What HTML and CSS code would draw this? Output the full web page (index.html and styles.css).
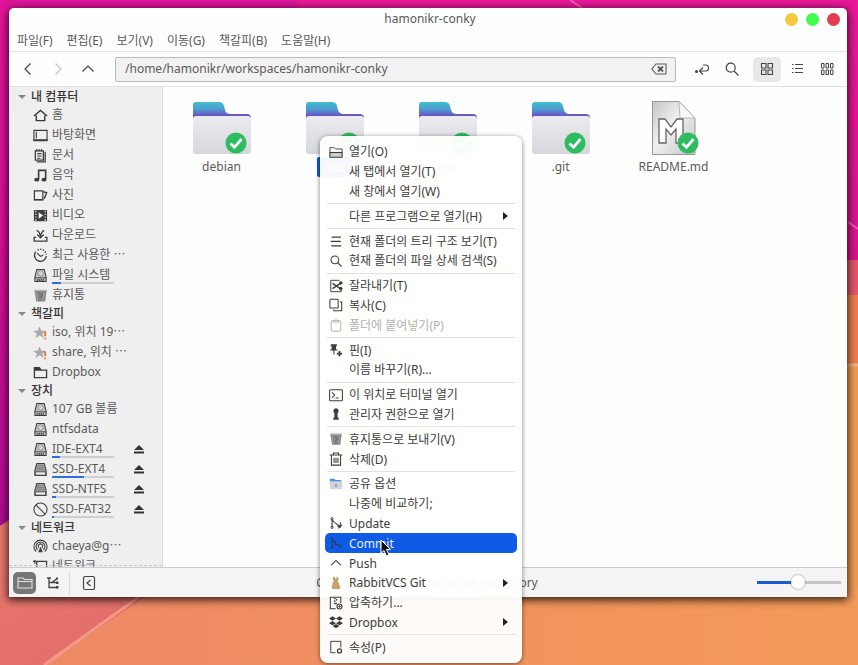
FILE: index.html
```html
<!DOCTYPE html>
<html lang="ko">
<head>
<meta charset="utf-8">
<title>hamonikr-conky</title>
<link rel="stylesheet" href="styles.css">
</head>
<body>
<svg class="wallpaper" viewBox="0 0 858 665" preserveAspectRatio="none" aria-hidden="true">
  <defs>
    <linearGradient id="wpPink" x1="0" y1="0" x2="0" y2="1"><stop offset="0" stop-color="#e2149a"/><stop offset=".4" stop-color="#d01094"/><stop offset="1" stop-color="#9a0a90"/></linearGradient>
    <linearGradient id="wpRight" x1="0" y1="0" x2="0" y2="1"><stop offset="0" stop-color="#ea189a"/><stop offset="1" stop-color="#d9118c"/></linearGradient>
    <linearGradient id="wpOrange" x1="0" y1="0" x2="1" y2="0"><stop offset="0" stop-color="#ee8868"/><stop offset=".5" stop-color="#f1915f"/><stop offset="1" stop-color="#f39a58"/></linearGradient>
    <linearGradient id="wpCoral" x1="0" y1="0" x2="1" y2="1"><stop offset="0" stop-color="#e87a6c"/><stop offset=".6" stop-color="#e4706c"/><stop offset="1" stop-color="#cf4c60"/></linearGradient>
  </defs>
  <rect width="858" height="665" fill="url(#wpPink)"/>
  <rect x="300" width="558" height="262" fill="url(#wpRight)"/>
  <rect x="430" y="260" width="428" height="35" fill="#e4566a"/>
  <rect x="430" y="295" width="428" height="70" fill="#ec7d4e"/>
  <rect x="430" y="365" width="428" height="300" fill="#f09a50"/>
  <path d="M430 365H858" stroke="#f5b088" stroke-width="3"/>
  <path d="M848 222L858 229" stroke="#f45cb8" stroke-width="2"/>
  <path d="M0 665V590L200 480H820V590H858V665Z" fill="url(#wpOrange)"/>
  <path d="M0 526L40 500L200 560L44 665H0Z" fill="url(#wpCoral)"/>
  <path d="M44 665L146 592" stroke="#f39a84" stroke-width="3"/>
  <path d="M570 0L582 8" stroke="#f45cb8" stroke-width="2"/>
</svg>

<svg class="sprite" aria-hidden="true">
  <defs>
    <linearGradient id="gTab" x1="0" y1="0" x2="0" y2="1"><stop offset="0" stop-color="#3fc0cc"/><stop offset=".4" stop-color="#5098d0"/><stop offset=".72" stop-color="#6b52c4"/></linearGradient>
    <linearGradient id="gFront" x1="0" y1="0" x2="0" y2="1"><stop offset="0" stop-color="#ececf0"/><stop offset="1" stop-color="#d6d7da"/></linearGradient>
    <linearGradient id="gDoc" x1="0" y1="0" x2="1" y2="1"><stop offset="0" stop-color="#c6c6c6"/><stop offset=".45" stop-color="#f0f0f0"/><stop offset="1" stop-color="#c4c4c4"/></linearGradient>
  </defs>
  <symbol id="check" viewBox="0 0 22 22"><circle cx="11" cy="11" r="10.5" fill="#2dbd60" stroke="none"/><path d="M5.500 11.500L9.500 15.300L16.500 7" fill="none" stroke="#fff" stroke-width="2.800"/></symbol>
  <symbol id="folder" viewBox="0 0 58 54">
    <path d="M0 20V4Q0 1 3 1H26Q30 1 31 5L32 9Q33 13 38 13H54Q58 13 58 17V20Z" fill="url(#gTab)" stroke="none"/>
    <path d="M3 15H55Q58 15 58 18V50Q58 53 55 53H3Q0 53 0 50V18Q0 15 3 15Z" fill="url(#gFront)" stroke="none"/>
    <use href="#check" x="32" y="31" width="22" height="22"/>
  </symbol>
  <symbol id="readme" viewBox="0 0 58 54">
    <path d="M7.500 .5H34L50 17V53.500H7.500Z" fill="url(#gDoc)" stroke="#999"/>
    <path d="M34 .5L50 17H35Z" fill="#f8f8f8" stroke="#aaa" stroke-width=".8"/>
    <path d="M14 42V18H20L26 26L32 18H38V42H31V28L26 34L21 28V42Z" fill="#fff" stroke="#666" stroke-width="1.300"/>
    <use href="#check" x="32" y="31" width="22" height="22"/>
  </symbol>
  <symbol id="back" viewBox="0 0 16 16"><path d="M10.500 2.500L5 8L10.500 13.500" stroke-width="1.200"/></symbol>
  <symbol id="next" viewBox="0 0 16 16"><path d="M5.500 2.500L11 8L5.500 13.500" stroke-width="1.200"/></symbol>
  <symbol id="up" viewBox="0 0 16 16"><path d="M2.500 10.500L8 5L13.500 10.500" stroke-width="1.200"/></symbol>
  <symbol id="clear" viewBox="0 0 16 16"><path d="M5 3H15V13H5L.8 8Z" stroke-width="1.100"/><path d="M7 5.500L12 10.500M12 5.500L7 10.500" stroke-width="1.900"/></symbol>
  <symbol id="path" viewBox="0 0 16 16"><path d="M9 4H12Q14.500 4 14.500 7Q14.500 10 12 10H5.500M9 6.500L5.500 10L9 13.500" stroke-width="1.100"/><circle cx="2.500" cy="10.500" r="1.500" fill="currentColor" stroke="none"/></symbol>
  <symbol id="search" viewBox="0 0 16 16"><circle cx="6.700" cy="6.700" r="4.500" stroke-width="1.200"/><path d="M10 10L14.500 14.500" stroke-width="1.300"/></symbol>
  <symbol id="grid" viewBox="0 0 16 16"><path d="M2.500 2.500H7V7H2.500ZM9 2.500H13.500V7H9ZM2.500 9H7V13.500H2.500ZM9 9H13.500V13.500H9Z" stroke-width="1.100"/></symbol>
  <symbol id="list" viewBox="0 0 16 16"><path d="M6 3.500H14M6 7.500H14M6 11.500H14M3 3.500H4.500M3 7.500H4.500M3 11.500H4.500" stroke-width="1.100"/></symbol>
  <symbol id="compact" viewBox="0 0 16 16"><path d="M2.500 2.500H5V7H2.500ZM7 2.500H9.500V7H7ZM11.500 2.500H14V7H11.500ZM2.500 9H5V13.500H2.500ZM7 9H9.500V13.500H7ZM11.500 9H14V13.500H11.500Z" stroke-width="1"/></symbol>
  <symbol id="home" viewBox="0 0 16 16"><path d="M1 8.500L8 2.500L15 8.500M3.500 8V13.500H12.500V8" stroke-width="1.500"/></symbol>
  <symbol id="desktop" viewBox="0 0 16 16"><path d="M1 2.500H15V13H1ZM3.500 4V11" stroke-width="1.200"/><path d="M.5 13H15.500" stroke-width="2"/></symbol>
  <symbol id="docs" viewBox="0 0 16 16"><path d="M2.500 3H11V13H2.500ZM4 14.700H13V4" stroke-width="1.400"/><path d="M4.500 6H9M4.500 8.500H9M4.500 11H8M4 1V3.500M6.500 1V3.500M9 1V3.500" stroke-width="1.100"/></symbol>
  <symbol id="music" viewBox="0 0 16 16"><path d="M6 12V2.500H13.500V12" stroke-width="1.700"/><ellipse cx="4" cy="12.500" rx="2.700" ry="2" fill="currentColor" stroke="none"/><ellipse cx="11.700" cy="12.500" rx="2.700" ry="2" fill="currentColor" stroke="none"/></symbol>
  <symbol id="photos" viewBox="0 0 16 16"><path d="M1.500 3H10.500V12.500H1.500Z" stroke-width="1.300"/><path d="M1 12.500H11M11 4L14.500 5L12 11.500" stroke-width="1.500"/></symbol>
  <symbol id="video" viewBox="0 0 16 16"><path d="M1 2H15V14H1Z" fill="currentColor" stroke="none"/><path d="M6 4.500L11 8L6 11.500Z" fill="#eee" stroke="none"/><path d="M3 3V14M13 3V14" stroke="#eee" stroke-width="1.300" stroke-dasharray="1.500 1.500"/></symbol>
  <symbol id="download" viewBox="0 0 16 16"><path d="M4 2.500Q7.500 4 8 10Q8.500 4 12 2.500M4.500 7L8 10.500L11.500 7M3.500 10H1.200V14H14.800V10H12.500" stroke-width="1.400"/></symbol>
  <symbol id="recent" viewBox="0 0 16 16"><path d="M3 4A6.300 6.300 0 1 0 14.200 8.500" stroke-width="1.400"/><path d="M5 2A6.300 6.300 0 0 1 14 7" stroke-width="1.500" stroke-dasharray="1.300 1.500"/><path d="M4.500 5.500L8 9L11 7.500" stroke-width="1.200"/></symbol>
  <symbol id="disk" viewBox="0 0 16 16"><path d="M4 1.500H12L14 10V14.500H2V10Z" fill="#c4c4c4" stroke-width="1.100"/><path d="M2 10.500H14" stroke-width="1"/><path d="M4 12.700H12" stroke-width="1.600" stroke-dasharray="1.500 .6"/><circle cx="8" cy="5.800" r="2.800" fill="#eee" stroke="#777" stroke-width=".9"/><path d="M6.500 6.500L9 5" stroke="#777" stroke-width=".8"/></symbol>
  <symbol id="usb" viewBox="0 0 16 16"><path d="M4 1.500H12L14 9V14.500H2V9Z" fill="#a4a4a4" stroke-width="1.100"/><path d="M2.500 10.500H13.500V14H2.500Z" fill="#eee" stroke-width=".9"/><path d="M4.500 4H11.500M4 6.200H12M4 8.200H12" stroke="#777" stroke-width="1"/></symbol>
  <symbol id="trash" viewBox="0 0 16 16"><path d="M1.500 2H14.500L13 14.500H3.500Z" fill="#858585" stroke="none"/><path d="M1.500 2.500H14.500" stroke="#bbb" stroke-width="1.500"/><path d="M4 5L5 13.500M12 5L11 13.500" stroke="#aaa" stroke-width="1"/><path d="M7 6L10 8L6.500 11" stroke="#666" stroke-width="1"/></symbol>
  <symbol id="star" viewBox="0 0 16 16"><path d="M7 1.500L9 6H14L10 9.200L11.500 14L7 11L2.500 14L4 9.200L0 6H5Z" fill="#aaa" stroke="none"/><path d="M13 7V12M13 13.500V15.200" stroke="#e2703a" stroke-width="2"/></symbol>
  <symbol id="dir" viewBox="0 0 16 16"><path d="M1.500 3H7L8.500 5.500H14.500V13.500H1.500Z" stroke-width="1.400"/><path d="M1 2H7L8.500 6H1Z" fill="currentColor" stroke="none"/></symbol>
  <symbol id="none" viewBox="0 0 16 16"><circle cx="8" cy="8" r="7" stroke-width="1.100"/><path d="M3 3L13 13" stroke-width="1.100"/></symbol>
  <symbol id="wave" viewBox="0 0 16 16"><path d="M3.500 13.500A7 7 0 1 1 12.500 13.500M5 11.500A4.700 4.700 0 1 1 11 11.500M6.500 9.500A2.400 2.400 0 1 1 9.500 9.500" stroke-width="1.200"/><path d="M8 8L5.500 14H10.500Z" fill="currentColor" stroke="none"/></symbol>
  <symbol id="net" viewBox="0 0 16 16"><path d="M4 2.500H14.500V10H4ZM2 1V5M0 2.500H3M9 10V14M4 14H14" stroke-width="1.300"/></symbol>
  <symbol id="eject" viewBox="0 0 12 12"><path d="M6 2L11 7H1ZM1 8.500H11V10.500H1Z" fill="currentColor" stroke="none"/></symbol>
  <symbol id="places" viewBox="0 0 16 16"><path d="M1 3H6L7.500 4.500H15V13H1ZM1 6.500H15" stroke-width="1.100"/></symbol>
  <symbol id="tree" viewBox="0 0 16 16"><path d="M4 2.500V12.500H12M4 7.500H12M2 3H6M12 3.500L7 7.500" stroke-width="1.300"/><path d="M11 2.500H13V4.500H11ZM11 6.500H13.500V9H11ZM11 11H13.500V13.500H11Z" fill="currentColor" stroke="none"/></symbol>
  <symbol id="hide" viewBox="0 0 16 16"><rect x="2.500" y="1.500" width="11" height="13" rx="1.500" stroke-width="1.200"/><path d="M9.500 5L6 8L9.500 11" stroke-width="1.200"/></symbol>
  <symbol id="open" viewBox="0 0 16 16"><path d="M1 3H6L7.500 4.500H15V8.500H1Z" stroke-width="1"/><path d="M1 8.500H15V14H1Z" fill="#ccc" stroke-width="1.200"/></symbol>
  <symbol id="lines" viewBox="0 0 16 16"><path d="M3 3.500H13.500M2 8.500H13.500M2.500 13.500H14" stroke-width="1.300"/></symbol>
  <symbol id="cut" viewBox="0 0 16 16"><path d="M12 1.500H2V14.500H14V12" stroke-width="1.100"/><path d="M4 5L13 11M4 11L13 5" stroke-width="1.600"/><circle cx="13.500" cy="4.500" r="1.500" fill="currentColor"/><circle cx="13.500" cy="11" r="1.500" fill="currentColor"/></symbol>
  <symbol id="copy" viewBox="0 0 16 16"><rect x="1" y="1.500" width="9.500" height="10" rx="1" stroke-width="1.200"/><path d="M12.500 4.500H14.500V14.500H5.500V13" stroke-width="1.200"/></symbol>
  <symbol id="paste" viewBox="0 0 16 16"><rect x="2.500" y="3" width="11" height="12" rx="1" stroke-width="1.100"/><path d="M5.500 5V3H7Q8 0 9 3H10.500V5Z" stroke-width="1"/></symbol>
  <symbol id="pin" viewBox="0 0 16 16"><path d="M2 1.500H9V3L8 4V6.500L10 8.500H6.200V13H5V8.500H1L3 6.500V4L2 3Z" fill="currentColor" stroke="none"/><path d="M12 9V15M9 12H15" stroke-width="2"/></symbol>
  <symbol id="term" viewBox="0 0 16 16"><rect x=".7" y="2" width="14.600" height="12.500" rx="1" stroke-width="1.200"/><path d="M3.500 5L6.500 8L3.500 11M7.500 11.500H11" stroke-width="1.200"/></symbol>
  <symbol id="key" viewBox="0 0 16 16"><path d="M8 1.500A3.200 3.200 0 0 1 9.800 7.200V12H11V14.500H5V12H6.200V7.200A3.200 3.200 0 0 1 8 1.500Z" fill="currentColor" stroke="none"/></symbol>
  <symbol id="delete" viewBox="0 0 16 16"><path d="M.8 3.500H15.200M5 3V1.200H11V3M2.800 4V15H13.200V4M5.800 6.500V12.500M8 6.500V12.500M10.200 6.500V12.500" stroke-width="1.200"/></symbol>
  <symbol id="share" viewBox="0 0 16 16"><path d="M1 2H6L7.500 3.500H14V8H1Z" fill="#4b94dc" stroke="none"/><path d="M1 5H15V14H1Z" fill="#d2d6dc" stroke="none"/><path d="M8 7.500L10.500 10H9V12H7V10H5.500Z" fill="#a5aab2" stroke="none"/></symbol>
  <symbol id="vcs" viewBox="0 0 16 16"><path d="M3.500 3V13M3.500 4Q6 8 13 12" stroke-width="1.300"/><circle cx="3.500" cy="3" r="1.300"/><circle cx="3.500" cy="13" r="1.300"/><path d="M10.500 14L13 12.500L15 10M13 7V12.500L9.500 11.500" stroke-width="1.200"/></symbol>
  <symbol id="vcs2" viewBox="0 0 16 16"><path d="M3.500 3V13M3.500 4Q6 8 13 12M7 5V10H12" stroke-width="1.300"/><circle cx="3.500" cy="3" r="1.300"/><circle cx="3.500" cy="13" r="1.300"/><circle cx="13" cy="12" r="1.300"/></symbol>
  <symbol id="rabbit" viewBox="0 0 16 16"><path d="M5 1Q7 1 7.500 5Q9 0 10.500 2Q10.500 5 9.500 6.500Q12 8 11 10Q13.500 12 12 14.500H4Q2.500 12 4.500 9.500Q4 7 6 6Q4 3 5 1Z" fill="#c9a468" stroke="#a98450" stroke-width=".6"/></symbol>
  <symbol id="zip" viewBox="0 0 16 16"><path d="M7.500 14.500H1.500V1.500H13.500V8" stroke-width="1.200"/><path d="M6.500 2V3.500M8.500 3.500V5M6.500 5V6.500M6 8.500H9" stroke-width="1.800"/><circle cx="12" cy="12" r="2.800" stroke-width="1.300"/><path d="M12 10.500V13.500M10.500 12H13.500" stroke-width="1"/></symbol>
  <symbol id="dropbox" viewBox="0 0 16 16"><path d="M4 1.500L8 4L4 6.500L0 4ZM12 1.500L16 4L12 6.500L8 4ZM4 6.800L8 9.300L4 11.800L0 9.300ZM12 6.800L16 9.300L12 11.800L8 9.300ZM8 10.200L12 12.700L8 15.200L4 12.700Z" fill="currentColor" stroke="none"/></symbol>
  <symbol id="props" viewBox="0 0 16 16"><path d="M7.500 14.500H2V1.500H13.500V8.500" stroke-width="1.100"/><circle cx="12" cy="12.500" r="2.300" stroke-width="1.500"/></symbol>
</svg>

<main class="window">
  <header class="titlebar">
    <h1 class="title">hamonikr-conky</h1>
    <div class="controls">
      <button class="dot dot-min" aria-label="최소화"></button>
      <button class="dot dot-max" aria-label="최대화"></button>
      <button class="dot dot-close" aria-label="닫기"></button>
    </div>
  </header>
  <nav class="menubar">
    <button>파일(F)</button><button>편집(E)</button><button>보기(V)</button><button>이동(G)</button><button>책갈피(B)</button><button>도움말(H)</button>
  </nav>
  <div class="toolbar">
    <div class="tools">
      <button class="tool" aria-label="뒤로"><svg><use href="#back"/></svg></button>
      <button class="tool" aria-label="앞으로" disabled><svg><use href="#next"/></svg></button>
      <button class="tool" aria-label="위로"><svg><use href="#up"/></svg></button>
    </div>
    <div class="location">
      <input type="text" aria-label="위치" value="/home/hamonikr/workspaces/hamonikr-conky">
      <button class="clear" aria-label="지우기"><svg><use href="#clear"/></svg></button>
    </div>
    <div class="tools">
      <button class="tool" aria-label="경로 전환"><svg><use href="#path"/></svg></button>
      <button class="tool" aria-label="검색"><svg><use href="#search"/></svg></button>
    </div>
    <div class="tools">
      <button class="tool active" aria-label="아이콘 보기"><svg><use href="#grid"/></svg></button>
      <button class="tool" aria-label="목록 보기"><svg><use href="#list"/></svg></button>
      <button class="tool" aria-label="간략히 보기"><svg><use href="#compact"/></svg></button>
    </div>
  </div>
  <div class="content">
    <aside class="sidebar">
      <h2>내 컴퓨터</h2>
      <ul>
        <li><a href="#"><svg><use href="#home"/></svg><span class="name">홈</span></a></li>
        <li><a href="#"><svg><use href="#desktop"/></svg><span class="name">바탕화면</span></a></li>
        <li><a href="#"><svg><use href="#docs"/></svg><span class="name">문서</span></a></li>
        <li><a href="#"><svg><use href="#music"/></svg><span class="name">음악</span></a></li>
        <li><a href="#"><svg><use href="#photos"/></svg><span class="name">사진</span></a></li>
        <li><a href="#"><svg><use href="#video"/></svg><span class="name">비디오</span></a></li>
        <li><a href="#"><svg><use href="#download"/></svg><span class="name">다운로드</span></a></li>
        <li><a href="#"><svg><use href="#recent"/></svg><span class="name">최근 사용한 ⋯</span></a></li>
        <li><a href="#"><svg><use href="#disk"/></svg><span class="name">파일 시스템<span class="usage"><span class="used" style="width:15%"></span></span></span></a></li>
        <li><a href="#"><svg><use href="#trash"/></svg><span class="name">휴지통</span></a></li>
      </ul>
      <h2>책갈피</h2>
      <ul>
        <li><a href="#"><svg><use href="#star"/></svg><span class="name">iso, 위치 19⋯</span></a></li>
        <li><a href="#"><svg><use href="#star"/></svg><span class="name">share, 위치 ⋯</span></a></li>
        <li><a href="#"><svg><use href="#dir"/></svg><span class="name">Dropbox</span></a></li>
      </ul>
      <h2>장치</h2>
      <ul>
        <li><a href="#"><svg><use href="#disk"/></svg><span class="name">107 GB 볼륨</span></a></li>
        <li><a href="#"><svg><use href="#disk"/></svg><span class="name">ntfsdata</span></a></li>
        <li><a href="#"><svg><use href="#disk"/></svg><span class="name">IDE-EXT4<span class="usage"><span class="used" style="width:13%"></span></span></span></a><button class="eject" aria-label="꺼내기"><svg><use href="#eject"/></svg></button></li>
        <li><a href="#"><svg><use href="#usb"/></svg><span class="name">SSD-EXT4<span class="usage"><span class="used" style="width:51%"></span></span></span></a><button class="eject" aria-label="꺼내기"><svg><use href="#eject"/></svg></button></li>
        <li><a href="#"><svg><use href="#usb"/></svg><span class="name">SSD-NTFS<span class="usage"><span class="used" style="width:6%"></span></span></span></a><button class="eject" aria-label="꺼내기"><svg><use href="#eject"/></svg></button></li>
        <li><a href="#"><svg><use href="#none"/></svg><span class="name">SSD-FAT32<span class="usage"><span class="used" style="width:3%"></span></span></span></a><button class="eject" aria-label="꺼내기"><svg><use href="#eject"/></svg></button></li>
      </ul>
      <h2>네트워크</h2>
      <ul>
        <li><a href="#"><svg><use href="#wave"/></svg><span class="name">chaeya@g⋯</span></a></li>
        <li><a href="#"><svg><use href="#net"/></svg><span class="name">네트워크</span></a></li>
      </ul>
    </aside>
    <section class="files">
      <figure><svg><use href="#folder"/></svg><figcaption>debian</figcaption></figure>
      <figure class="selected"><svg><use href="#folder"/></svg><figcaption>etc</figcaption></figure>
      <figure><svg><use href="#folder"/></svg><figcaption>usr</figcaption></figure>
      <figure><svg><use href="#folder"/></svg><figcaption>.git</figcaption></figure>
      <figure><svg><use href="#readme"/></svg><figcaption>README.md</figcaption></figure>
    </section>
  </div>
  <footer class="statusbar">
    <div class="status-tools">
      <button class="status-btn on" aria-label="위치"><svg><use href="#places"/></svg></button>
      <button class="status-btn" aria-label="트리"><svg><use href="#tree"/></svg></button>
      <span class="divider"></span>
      <button class="status-btn" aria-label="사이드바 숨기기"><svg><use href="#hide"/></svg></button>
    </div>
    <p>Commit modifications to the repository</p>
    <input class="zoom" type="range" min="0" max="100" value="49" aria-label="확대">
  </footer>
</main>

<div class="menu" role="menu">
  <button role="menuitem"><svg><use href="#open"/></svg>열기(O)</button>
  <button role="menuitem"><svg></svg>새 탭에서 열기(T)</button>
  <button role="menuitem"><svg></svg>새 창에서 열기(W)</button>
  <hr>
  <button role="menuitem" class="sub"><svg></svg>다른 프로그램으로 열기(H)</button>
  <hr>
  <button role="menuitem"><svg><use href="#lines"/></svg>현재 폴더의 트리 구조 보기(T)</button>
  <button role="menuitem"><svg><use href="#search"/></svg>현재 폴더의 파일 상세 검색(S)</button>
  <hr>
  <button role="menuitem"><svg><use href="#cut"/></svg>잘라내기(T)</button>
  <button role="menuitem"><svg><use href="#copy"/></svg>복사(C)</button>
  <button role="menuitem" disabled><svg><use href="#paste"/></svg>폴더에 붙여넣기(P)</button>
  <hr>
  <button role="menuitem"><svg><use href="#pin"/></svg>핀(I)</button>
  <button role="menuitem"><svg></svg>이름 바꾸기(R)...</button>
  <hr>
  <button role="menuitem"><svg><use href="#term"/></svg>이 위치로 터미널 열기</button>
  <button role="menuitem"><svg><use href="#key"/></svg>관리자 권한으로 열기</button>
  <hr>
  <button role="menuitem"><svg><use href="#trash"/></svg>휴지통으로 보내기(V)</button>
  <button role="menuitem"><svg><use href="#delete"/></svg>삭제(D)</button>
  <hr>
  <button role="menuitem"><svg><use href="#share"/></svg>공유 옵션</button>
  <button role="menuitem"><svg></svg>나중에 비교하기;</button>
  <button role="menuitem"><svg><use href="#vcs"/></svg>Update</button>
  <button role="menuitem" class="hover"><svg><use href="#vcs2"/></svg>Commit</button>
  <button role="menuitem"><svg><use href="#up"/></svg>Push</button>
  <button role="menuitem" class="sub"><svg><use href="#rabbit"/></svg>RabbitVCS Git</button>
  <button role="menuitem"><svg><use href="#zip"/></svg>압축하기...</button>
  <button role="menuitem" class="sub"><svg><use href="#dropbox"/></svg>Dropbox</button>
  <hr>
  <button role="menuitem"><svg><use href="#props"/></svg>속성(P)</button>
</div>
<svg class="cursor" viewBox="0 0 12 18" aria-hidden="true"><path d="M1 1V14L4 11.500L6.500 17L9 16L6.500 10.500H10.500Z" fill="#111" stroke="#fff"/></svg>
</body>
</html>
```
FILE: styles.css
```css
* { box-sizing: border-box; }
body {
  margin: 0;
  height: 100vh;
  padding: 8px 11px 68px 9px;
  display: flex;
  overflow: hidden;
  position: relative;
  font: 12px/20px "Noto Sans", "Noto Sans CJK KR", sans-serif;
  color: #5a5a5a;
}
button, input { font: inherit; color: inherit; }
button { border: 0; padding: 0; background: none; }
ul, h1, h2, p, figure { margin: 0; padding: 0; }
ul { list-style: none; }
a { color: inherit; text-decoration: none; }
svg { display: block; flex: none; width: 16px; height: 16px; fill: none; stroke: currentColor; }
.sprite { position: absolute; width: 0; height: 0; }
.wallpaper { position: absolute; inset: 0; width: 100%; height: 100%; z-index: -1; stroke: none; }

.window {
  flex: 1;
  min-width: 0;
  display: flex;
  flex-direction: column;
  background: #fefefe;
  border-radius: 5px 5px 0 0;
  box-shadow: 0 2px 8px 1px rgba(0, 0, 0, .8);
  overflow: hidden;
}
.titlebar {
  display: grid;
  grid-template-columns: 1fr auto 1fr;
  align-items: center;
  height: 22px;
  padding: 0 7px 0 11px;
}
.title { grid-column: 2; font-size: 12px; font-weight: 400; }
.controls { display: flex; justify-content: flex-end; gap: 8px; }
.dot { width: 13px; height: 13px; border-radius: 50%; }
.dot-min { background: #f2c83c; }
.dot-max { background: #42fb4e; }
.dot-close { background: #e33d50; }
.menubar {
  display: flex;
  gap: 14px;
  height: 22px;
  padding: 1px 8px 0;
  border-bottom: 1px solid #e4e4e4;
}
.toolbar {
  display: flex;
  align-items: center;
  gap: 7px;
  height: 35px;
  padding: 0 6px 0 5px;
  border-bottom: 1px solid #e0e0e0;
}
.tools { display: flex; gap: 2px; }
.tool {
  display: grid;
  place-items: center;
  width: 28px;
  height: 25px;
  border-radius: 5px;
  color: #444;
}
.tool:disabled { color: #c4c4c4; }
.tool.active { background: #e8e8e8; }
.location {
  flex: 1;
  display: flex;
  align-items: center;
  height: 25px;
  margin: 0 5px 0 6px;
  padding: 0 8px 0 9px;
  background: #f2f2f2;
  border: 1px solid #bababa;
  border-radius: 2px;
}
.location input { flex: 1; min-width: 0; padding: 0; border: 0; background: none; }
.content { flex: 1; min-height: 0; display: flex; }
.sidebar {
  position: relative;
  width: 154px;
  flex: none;
  padding-top: 1px;
  background: #efefef;
  border-right: 1px solid #dcdcdc;
  overflow: hidden;
}
.sidebar::after {
  content: "";
  position: absolute;
  left: 0;
  right: 0;
  bottom: 1px;
  border-bottom: 1px dashed #c8c8c8;
}
.sidebar h2 {
  display: flex;
  align-items: center;
  gap: 5px;
  height: 17px;
  padding-left: 9px;
  font-size: 12px;
  font-weight: 500;
  color: #333;
}
.sidebar h2::before {
  content: "";
  border: 4px solid transparent;
  border-top-color: #888;
  border-bottom: 0;
}
.sidebar li { display: flex; align-items: center; height: 20px; padding: 0 17px 0 24px; }
.sidebar li a { display: flex; flex: 1; align-items: center; gap: 4px; }
.sidebar svg { width: 15px; height: 15px; color: #3c3c3c; }
.name { position: relative; white-space: nowrap; min-width: 62px; }
.usage { position: absolute; left: 0; bottom: 1px; width: 62px; height: 2px; background: #cfcfcf; }
.used { display: block; height: 2px; background: #2a6fe0; }
.sidebar .eject svg { width: 12px; height: 12px; color: #333; }
.files { flex: 1; display: flex; flex-wrap: wrap; align-content: flex-start; padding: 14px 2px; }
.files figure { width: 113px; display: flex; flex-direction: column; align-items: center; gap: 2px; }
.files svg { width: 58px; height: 54px; }
.files figcaption { padding: 0 9px; border-radius: 2px; }
.files .selected figcaption { background: #1558d6; color: #fff; }
.statusbar {
  display: grid;
  grid-template-columns: 1fr auto 1fr;
  align-items: center;
  height: 30px;
  padding: 0 6px 0 4px;
  background: #f4f4f4;
  border-top: 1px solid #cdcdcd;
}
.status-tools { display: flex; align-items: center; gap: 5px; }
.status-btn { display: grid; place-items: center; width: 23px; height: 22px; border-radius: 5px; color: #444; }
.status-btn.on { background: #767676; color: #e4e4e4; }
.divider { width: 1px; height: 24px; margin-right: 2px; background: #dcdcdc; }
.zoom { appearance: none; justify-self: end; width: 84px; height: 16px; margin: 0; background: none; }
.zoom::-webkit-slider-runnable-track {
  height: 3px;
  background: linear-gradient(90deg, #1c5cd0 49%, #c4c4c4 49%);
}
.zoom::-webkit-slider-thumb {
  appearance: none;
  width: 14px;
  height: 14px;
  margin-top: -6px;
  border-radius: 50%;
  background: #fff;
  box-shadow: 0 0 2px rgba(0, 0, 0, .5);
}

.menu {
  position: absolute;
  left: 320px;
  top: 136px;
  bottom: 2px;
  width: 202px;
  display: flex;
  flex-direction: column;
  padding: 6px 5px;
  background: rgba(255, 255, 254, .96);
  border-radius: 8px;
  box-shadow: 0 1px 5px rgba(0, 0, 0, .5);
  color: #3c3c3c;
}
.menu button {
  flex: 1;
  min-height: 19px;
  display: flex;
  align-items: center;
  gap: 6px;
  padding: 0 9px 0 4px;
  border-radius: 5px;
  line-height: 19px;
  text-align: left;
  white-space: nowrap;
}
.menu svg { width: 14px; height: 14px; }
.menu button:disabled { color: #b0b0b0; }
.menu .hover { background: #0f5be6; color: #e6eefc; }
.menu .hover svg { color: #24406f; }
.menu .sub::after {
  content: "";
  margin-left: auto;
  border: 4px solid transparent;
  border-left: 5px solid #222;
  border-right: 0;
}
.menu hr { width: 188px; margin: 2px; border: 0; border-top: 1px solid #e2e2e2; }
.cursor { position: absolute; left: 380px; top: 539px; width: 12px; height: 18px; }
```
